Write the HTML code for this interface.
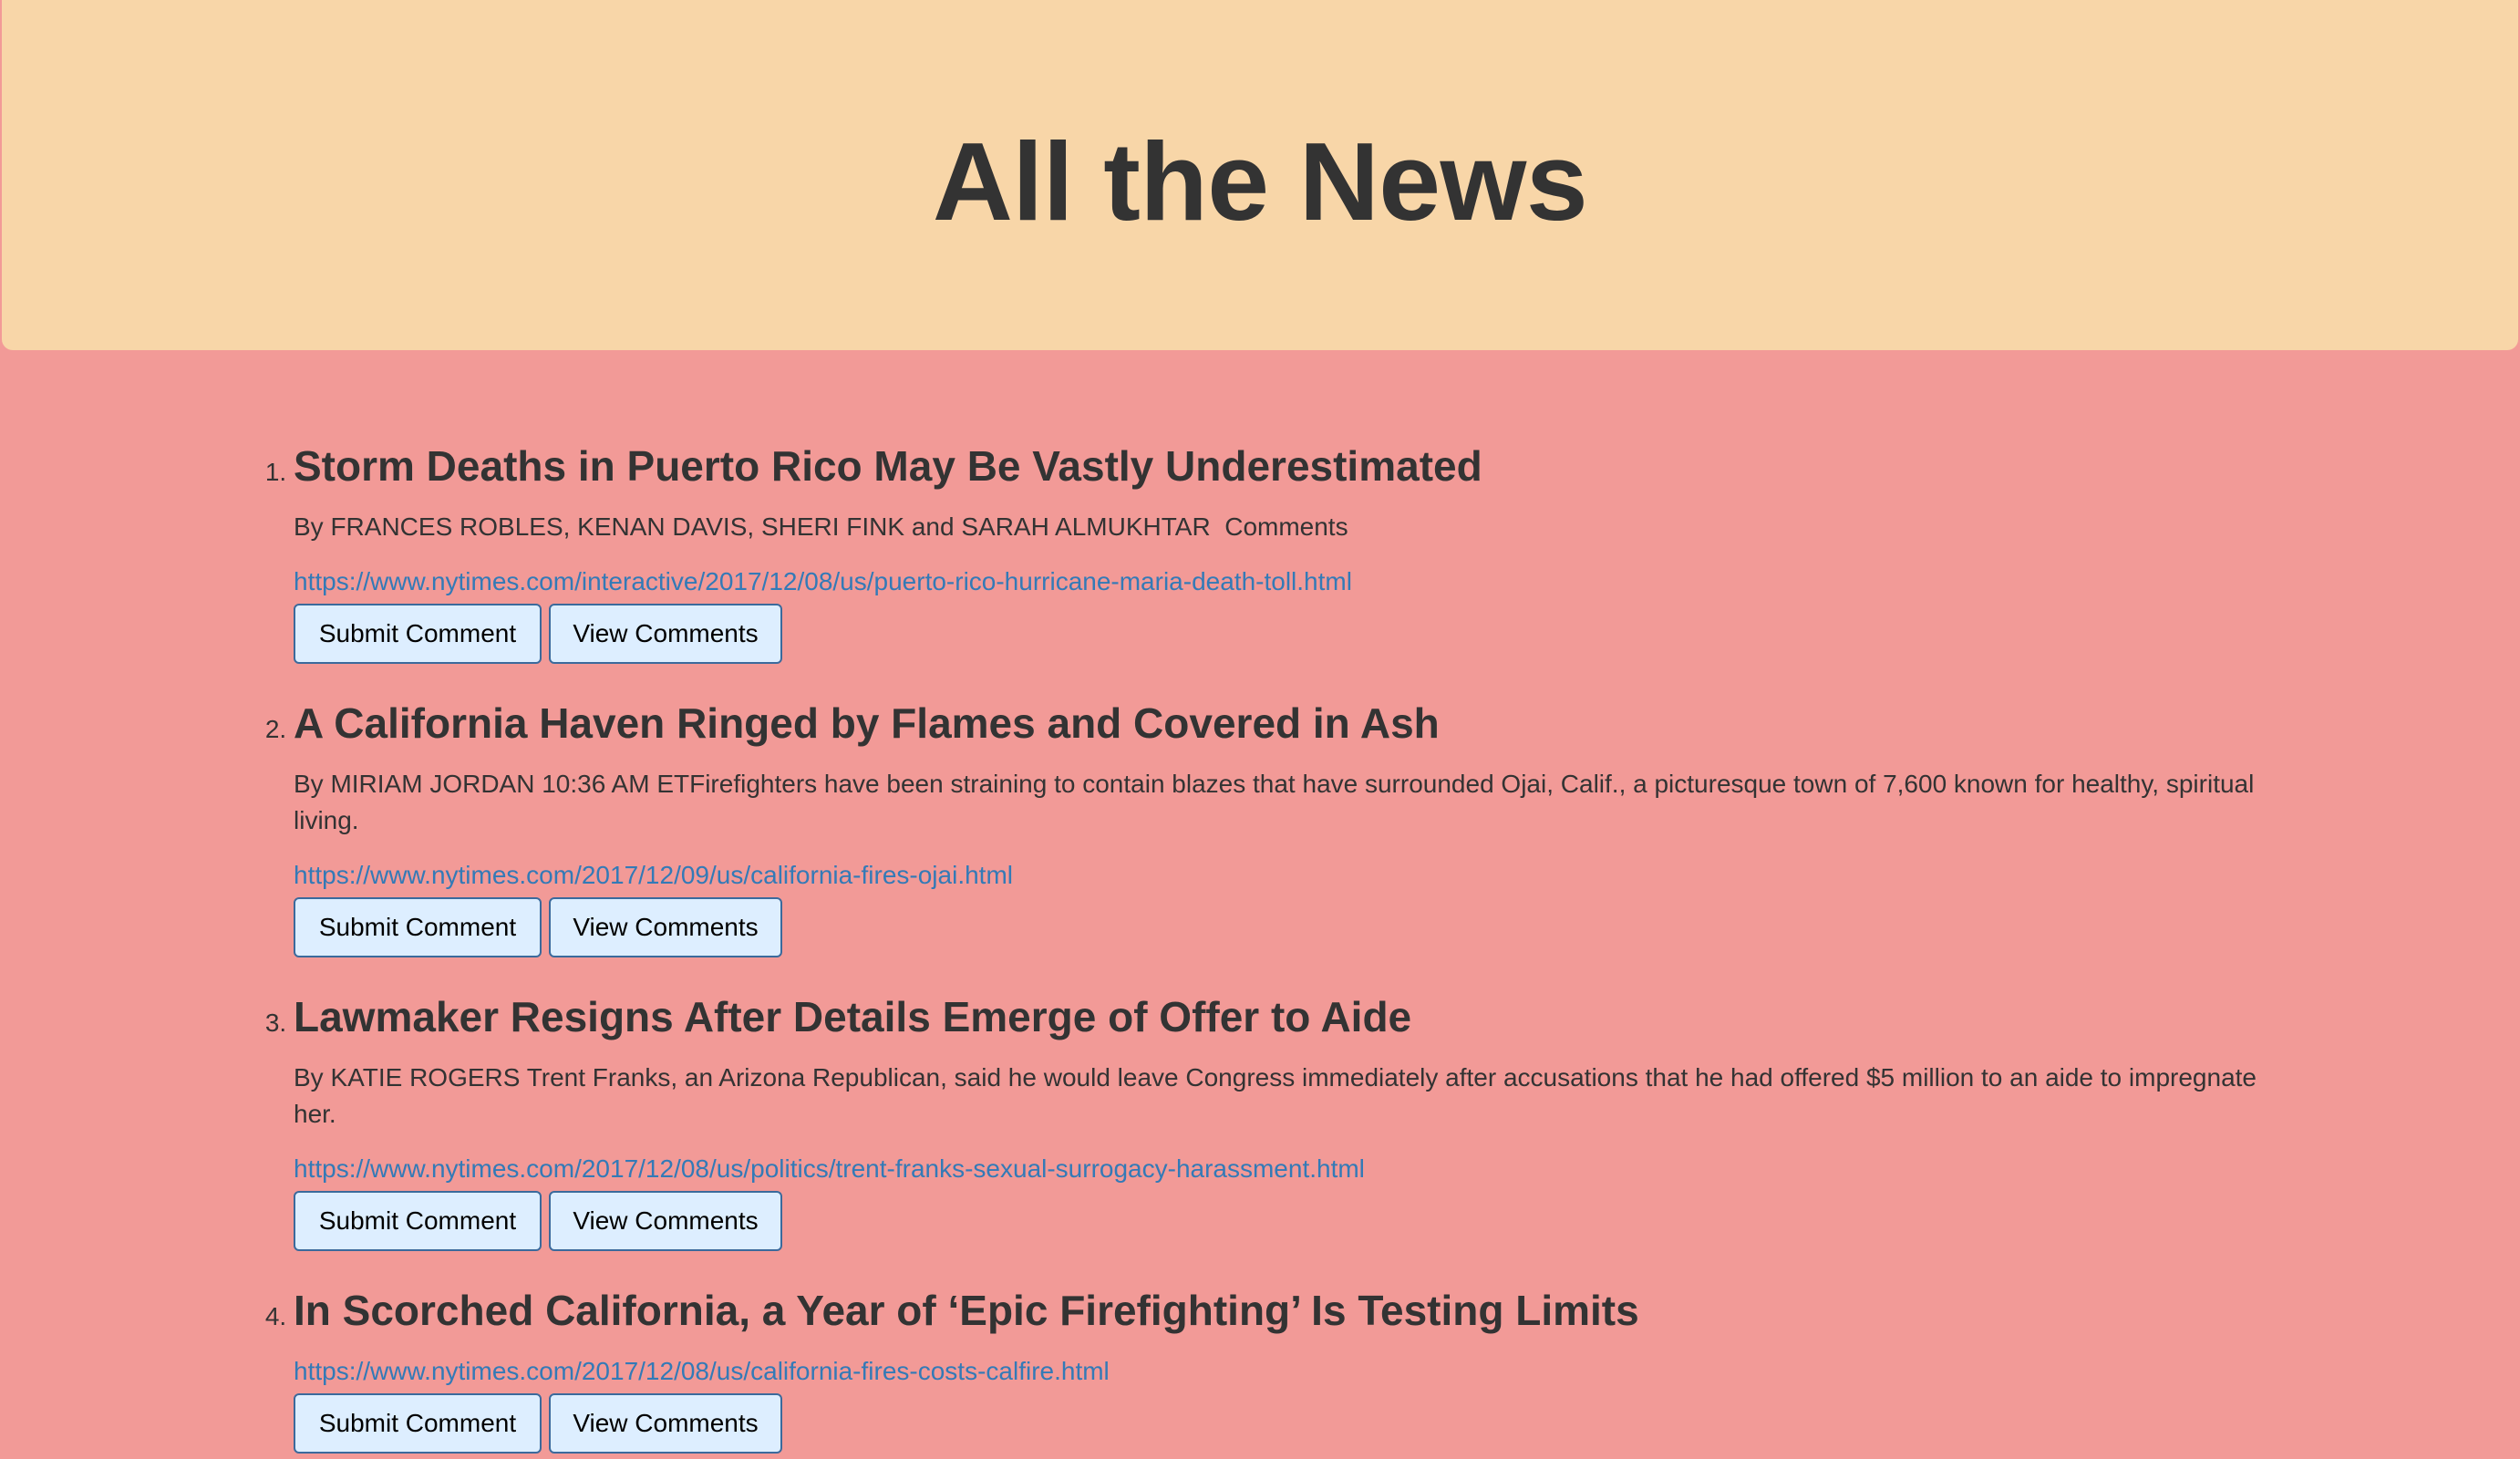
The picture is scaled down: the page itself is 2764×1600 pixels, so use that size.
<!DOCTYPE html>
<html><head><meta charset="utf-8"><style>
html{zoom:2}
body{margin:0;background:#f29a97;font-family:"Liberation Sans",Arial,sans-serif;font-size:14px;line-height:20px;color:#333;width:1382px;height:800px;overflow:hidden}
.jumbo{margin:0 1px 51px 1px;height:192px;background:#f8d6a8;border-radius:0 0 6px 6px;text-align:center;box-sizing:border-box;padding-top:66px}
.jumbo h1{margin:0;font-size:61px;line-height:1.1;font-weight:bold;color:#333;letter-spacing:-0.3px}
ol{margin:0 0 0 121px;padding-left:40px;width:1100px}
li h3{margin:20px 0 10px;font-size:23px;line-height:1.13;font-weight:bold}
li p{margin:0 0 10px}
li a{color:#337ab7;text-decoration:none}
.btns{margin-top:2px;height:33px;font-size:0}
button{font-family:"Liberation Sans",Arial,sans-serif;font-size:14px;height:33px;padding:0;background:#ddeeff;border:1px solid #3b6a9c;border-radius:3px;color:#000;margin:0 4px 0 0;vertical-align:top}
</style></head><body>
<div class="jumbo"><h1>All the News</h1></div>
<ol>
<li><h3>Storm Deaths in Puerto Rico May Be Vastly Underestimated</h3>
<p>By FRANCES ROBLES, KENAN DAVIS, SHERI FINK and SARAH ALMUKHTAR &nbsp;Comments</p>
<div><a>https://www.nytimes.com/interactive/2017/12/08/us/puerto-rico-hurricane-maria-death-toll.html</a></div>
<div class="btns"><button style="width:136px">Submit Comment</button><button style="width:128px">View Comments</button></div></li>
<li><h3>A California Haven Ringed by Flames and Covered in Ash</h3>
<p>By MIRIAM JORDAN 10:36 AM ETFirefighters have been straining to contain blazes that have surrounded Ojai, Calif., a picturesque town of 7,600 known for healthy, spiritual living.</p>
<div><a>https://www.nytimes.com/2017/12/09/us/california-fires-ojai.html</a></div>
<div class="btns"><button style="width:136px">Submit Comment</button><button style="width:128px">View Comments</button></div></li>
<li><h3>Lawmaker Resigns After Details Emerge of Offer to Aide</h3>
<p>By KATIE ROGERS Trent Franks, an Arizona Republican, said he would leave Congress immediately after accusations that he had offered $5 million to an aide to impregnate her.</p>
<div><a>https://www.nytimes.com/2017/12/08/us/politics/trent-franks-sexual-surrogacy-harassment.html</a></div>
<div class="btns"><button style="width:136px">Submit Comment</button><button style="width:128px">View Comments</button></div></li>
<li><h3>In Scorched California, a Year of ‘Epic Firefighting’ Is Testing Limits</h3>
<div><a>https://www.nytimes.com/2017/12/08/us/california-fires-costs-calfire.html</a></div>
<div class="btns"><button style="width:136px">Submit Comment</button><button style="width:128px">View Comments</button></div></li>
</ol>
</body></html>
